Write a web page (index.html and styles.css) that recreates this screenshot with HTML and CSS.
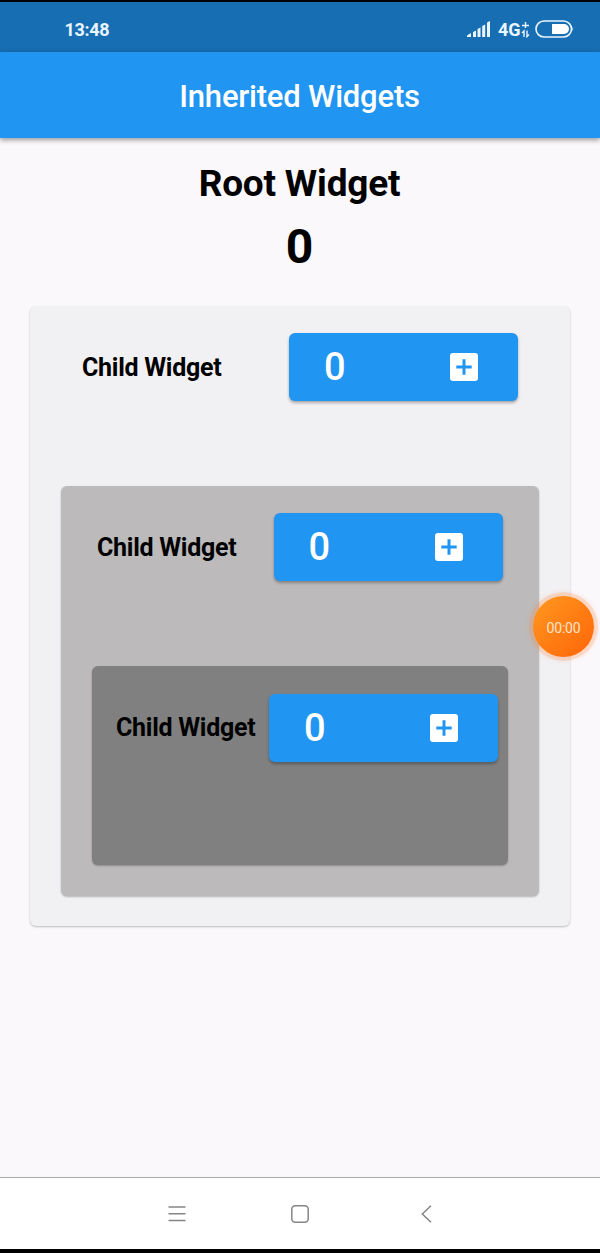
FILE: index.html
```html
<!DOCTYPE html>
<html lang="en">
<head>
<meta charset="utf-8">
<title>Inherited Widgets</title>
<link rel="stylesheet" href="styles.css">
</head>
<body>
<div class="screen">
  <div class="status">
    <span class="clock">13:48</span>
    <svg class="signal" width="24" height="18" viewBox="0 0 24 18" fill="#eaf6ff"><path d="M0 17v-1.500l4-2.500v4zM6 12l3-1.500V17H6zM10.500 9l3-1.500V17h-3zM15.200 6l3-1.500V17h-3zM20 2.500L23 1v16h-3z"/></svg>
    <span class="network">4G</span>
    <svg class="data" width="9" height="18" viewBox="0 0 9 18" fill="none" stroke="#eaf6ff" stroke-width="1.400"><path d="M4.500 1v6M1 4.500h7M3 16V10L1 12M6 9.500v6l2-2"/></svg>
    <svg class="battery" width="40" height="18" viewBox="0 0 40 18"><rect x="1" y="1" width="35.500" height="16" rx="8" fill="none" stroke="#eaf6ff" stroke-width="1.600"/><path d="M17 4h12a5 5 0 0 1 0 10H17z" fill="#fff"/><path d="M37.500 6.500q1.500 2.500 0 5z" fill="#eaf6ff"/></svg>
  </div>
  <header class="appbar"><h1>Inherited Widgets</h1></header>
  <main class="content">
    <h2 class="root-title">Root Widget</h2>
    <div class="root-count">0</div>
    <section class="card outer">
      <div class="row">
        <span class="label">Child Widget</span>
        <button class="counter"><span class="count">0</span><svg class="plus" width="28" height="28" viewBox="0 0 28 28"><rect width="28" height="28" rx="3" fill="#fff"/><path d="M14 6.300v15.400M6.300 14h15.400" stroke="#2095f2" stroke-width="3"/></svg></button>
      </div>
      <section class="card middle">
        <div class="row">
          <span class="label">Child Widget</span>
          <button class="counter"><span class="count">0</span><svg class="plus" width="28" height="28" viewBox="0 0 28 28"><rect width="28" height="28" rx="3" fill="#fff"/><path d="M14 6.300v15.400M6.300 14h15.400" stroke="#2095f2" stroke-width="3"/></svg></button>
        </div>
        <section class="card inner">
          <div class="row">
            <span class="label">Child Widget</span>
            <button class="counter"><span class="count">0</span><svg class="plus" width="28" height="28" viewBox="0 0 28 28"><rect width="28" height="28" rx="3" fill="#fff"/><path d="M14 6.300v15.400M6.300 14h15.400" stroke="#2095f2" stroke-width="3"/></svg></button>
          </div>
        </section>
      </section>
    </section>
  </main>
  <nav class="navbar">
    <svg width="18" height="18" viewBox="0 0 18 18" fill="none" stroke="#858585" stroke-width="1.500"><path d="M.5 2h17M.5 8.800h17M.5 15.500h17"/></svg>
    <svg width="18" height="18" viewBox="0 0 18 18" fill="none" stroke="#858585" stroke-width="1.500"><rect x=".8" y=".8" width="16.400" height="16.400" rx="3.500"/></svg>
    <svg width="18" height="18" viewBox="0 0 18 18" fill="none" stroke="#858585" stroke-width="1.500"><path d="M16 .7L7.300 9l8.700 8.300"/></svg>
  </nav>
  <div class="timer">00:00</div>
</div>
</body>
</html>
```
FILE: styles.css
```css
* { box-sizing: border-box; }
body { margin: 0; font-family: Roboto, sans-serif; background: #000; }
.screen {
  position: relative;
  display: flex;
  flex-direction: column;
  height: 1253px;
  padding: 2px 0 4px;
  overflow: hidden;
}
.status {
  display: flex;
  align-items: center;
  height: 50px;
  padding: 5px 27px 0 64.500px;
  background: #176eb3;
  color: #eaf6ff;
  font-size: 18px;
  font-weight: 700;
}
.clock { margin-right: auto; letter-spacing: -.35px; }
.signal { margin-top: -2px; }
.network { margin-left: 7px; }
.data { margin: 0 5px 0 0; }
.battery { margin: -1px -1.500px 0 0; }
.appbar {
  z-index: 1;
  display: flex;
  align-items: center;
  justify-content: center;
  height: 86px;
  padding: 4px 1px 0 0;
  background: #2095f2;
  box-shadow: 0 2px 5px rgba(0, 0, 0, .4);
}
.appbar h1 {
  margin: 0;
  color: #fff;
  font-size: 31px;
  font-weight: 500;
  letter-spacing: -.2px;
  line-height: 36px;
}
.content {
  flex: 1;
  padding: 24px 30px 0;
  background: #faf8fb;
  text-align: center;
}
.root-title { margin: 0; padding-right: 1px; font-size: 37px; font-weight: 700; letter-spacing: -.2px; line-height: 44px; }
.root-count { margin-top: 13px; padding-right: 1px; font-size: 48px; font-weight: 700; line-height: 56px; }
.card { border-radius: 6px; box-shadow: 0 1px 2px rgba(0, 0, 0, .25); }
.outer { height: 620.500px; margin-top: 30.500px; padding: 27.500px 31px 0; background: #f1f0f2; }
.middle { height: 409.500px; margin-top: 85.500px; padding: 27px 31px 0; background: #bcbaba; }
.inner { height: 198.500px; margin-top: 85.500px; padding: 28px 10px 0 24px; background: #808080; }
.row { display: flex; align-items: center; justify-content: space-between; height: 67.500px; }
.outer > .row { padding: 0 21px; }
.middle > .row { padding: 0 5.500px 0 5px; }
.label { padding-top: 1.500px; font-size: 25px; font-weight: 700; letter-spacing: -.28px; line-height: 30px; white-space: nowrap; }
.inner .label { padding-top: 1px; }
.counter {
  display: flex;
  align-items: center;
  justify-content: space-between;
  width: 229px;
  height: 67.500px;
  padding: 0 40px 0 35px;
  border: 0;
  border-radius: 6px;
  background: #2095f2;
  box-shadow: 0 2px 3px rgba(0, 0, 0, .3);
  color: #fff;
  font-family: inherit;
}
.count { font-size: 38px; font-weight: 500; letter-spacing: -.5px; line-height: 44px; }
.navbar {
  display: flex;
  justify-content: center;
  align-items: center;
  gap: 105.500px;
  height: 72px;
  border-top: 1px solid #aaa;
  background: #fff;
}
.timer {
  position: absolute;
  z-index: 2;
  top: 596px;
  left: 533px;
  width: 61px;
  height: 61px;
  border-radius: 50%;
  background: linear-gradient(135deg, #ff981f, #ff6508);
  box-shadow: 0 0 0 4px rgba(255, 139, 77, .2), 0 0 4px 4px rgba(255, 139, 77, .15);
  color: #ffe4cd;
  font-size: 14px;
  letter-spacing: -.2px;
  line-height: 64px;
  text-align: center;
}
```
